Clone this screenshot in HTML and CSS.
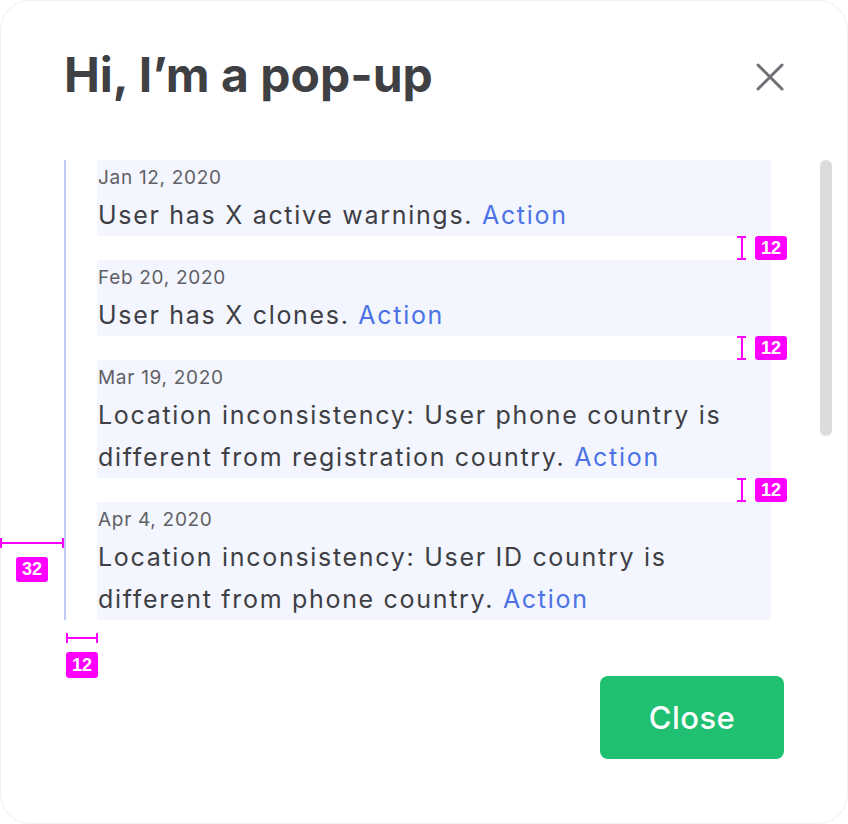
FILE: index.html
```html
<!DOCTYPE html>
<html lang="en">
<head>
<meta charset="utf-8">
<title>Pop-up</title>
<link rel="stylesheet" href="styles.css">
</head>
<body>
<div class="popup">
  <header class="head">
    <h1 class="title">Hi, I’m a pop-up</h1>
    <button class="x" aria-label="Close">
      <svg width="28" height="28" viewBox="0 0 28 28"><path d="M2 2L26 26M26 2L2 26" stroke="#6f7075" stroke-width="3" stroke-linecap="round" fill="none"/></svg>
    </button>
  </header>
  <div class="content">
    <div class="rail"></div>
    <ul class="list">
      <li class="item"><div class="date">Jan 12, 2020</div><p class="msg">User has X active warnings. <a class="act">Action</a></p></li>
      <li class="item"><div class="date">Feb 20, 2020</div><p class="msg">User has X clones. <a class="act">Action</a></p></li>
      <li class="item"><div class="date">Mar 19, 2020</div><p class="msg">Location inconsistency: User phone country is different from registration country. <a class="act">Action</a></p></li>
      <li class="item"><div class="date">Apr 4, 2020</div><p class="msg">Location inconsistency: User ID country is different from phone country. <a class="act">Action</a></p></li>
    </ul>
    <div class="track"><div class="thumb"></div></div>
  </div>
  <footer class="foot"><button class="btn">Close</button></footer>

  <div class="vm vm1"><span class="ibeam"></span><span class="tag">12</span></div>
  <div class="vm vm2"><span class="ibeam"></span><span class="tag">12</span></div>
  <div class="vm vm3"><span class="ibeam"></span><span class="tag">12</span></div>
  <div class="hm hm-left"><span class="hline"></span><span class="tag">32</span></div>
  <div class="hm hm-bottom"><span class="hline"></span><span class="tag">12</span></div>
</div>
</body>
</html>
```
FILE: styles.css
```css
* { box-sizing: border-box; }
html, body { margin: 0; padding: 0; background: #ffffff; }
body { font-family: Inter, "Noto Sans", sans-serif; color: #3e3f44; }

.popup {
  position: relative;
  width: 848px;
  height: 824px;
  background: #fff;
  border: 1px solid #f0f0f0;
  border-radius: 30px;
  padding: 46px 63px 0 63px;
  display: flex;
  flex-direction: column;
}

.head {
  display: flex;
  align-items: center;
  justify-content: space-between;
  height: 56px;
}
.title {
  margin: 0;
  font-size: 48px;
  line-height: 56px;
  font-weight: 700;
  color: #3f4044;
}
.x {
  border: 0;
  background: none;
  padding: 0;
  width: 28px;
  height: 28px;
  display: block;
  margin-top: 4px;
}
.x svg { display: block; }

.content {
  margin-top: 57px;
  display: flex;
  margin-right: -48px;
  height: 460px;
}
.rail {
  width: 2px;
  background: #c0cbf7;
  flex: none;
}
.list {
  list-style: none;
  margin: 0 0 0 31px;
  padding: 0;
  width: 674px;
  display: flex;
  flex-direction: column;
  gap: 24px;
}
.item {
  background: #f3f6fe;
  padding: 6px 0 0 1px;
}
.date {
  font-size: 19px;
  line-height: 24px;
  letter-spacing: 0.7px;
  color: #5f6065;
  margin-bottom: 4px;
}
.msg {
  margin: 0;
  font-size: 25px;
  line-height: 42px;
  letter-spacing: 1.7px;
  color: #3e3f44;
}
.act { color: #4c72e6; }

.track {
  margin-left: 49px;
  width: 12px;
}
.thumb {
  width: 12px;
  height: 276px;
  background: #dcdcde;
  border-radius: 6px;
}

.foot {
  margin-top: 56px;
  display: flex;
  justify-content: flex-end;
}
.btn {
  width: 184px;
  height: 83px;
  border: 0;
  border-radius: 8px;
  background: #20c073;
  color: #fff;
  font-family: Inter, "Noto Sans", sans-serif;
  font-size: 31px;
  font-weight: 500;
  letter-spacing: 0.5px;
}

/* measurement annotations */
.tag {
  position: absolute;
  width: 32px;
  height: 24px;
  background: #ff00ff;
  color: #fff;
  border-radius: 3px;
  font-family: "Liberation Sans", Arial, sans-serif;
  font-weight: 700;
  font-size: 18px;
  line-height: 24px;
  text-align: center;
}
.vm { position: absolute; left: 736px; width: 50px; height: 24px; }
.vm1 { top: 235px; }
.vm2 { top: 335px; }
.vm3 { top: 477px; }
.ibeam {
  position: absolute;
  left: 0;
  top: 0;
  width: 9px;
  height: 24px;
  border-top: 2px solid #ff00ff;
  border-bottom: 2px solid #ff00ff;
}
.ibeam::before {
  content: "";
  position: absolute;
  left: 3.5px;
  top: 0;
  width: 2px;
  height: 100%;
  background: #ff00ff;
}
.vm .tag { left: 18px; top: 0; }

.hm { position: absolute; }
.hline {
  position: absolute;
  left: 0;
  top: 0;
  height: 10px;
  border-left: 2px solid #ff00ff;
  border-right: 2px solid #ff00ff;
}
.hline::before {
  content: "";
  position: absolute;
  left: 0;
  right: 0;
  top: 4px;
  height: 2px;
  background: #ff00ff;
}
.hm-left { left: -1px; top: 537px; }
.hm-left .hline { width: 64px; }
.hm-left .tag { left: 16px; top: 19px; height: 25px; }
.hm-bottom { left: 65px; top: 632px; }
.hm-bottom .hline { width: 32px; }
.hm-bottom .tag { left: 0; top: 19px; height: 26px; line-height: 26px; }
```
